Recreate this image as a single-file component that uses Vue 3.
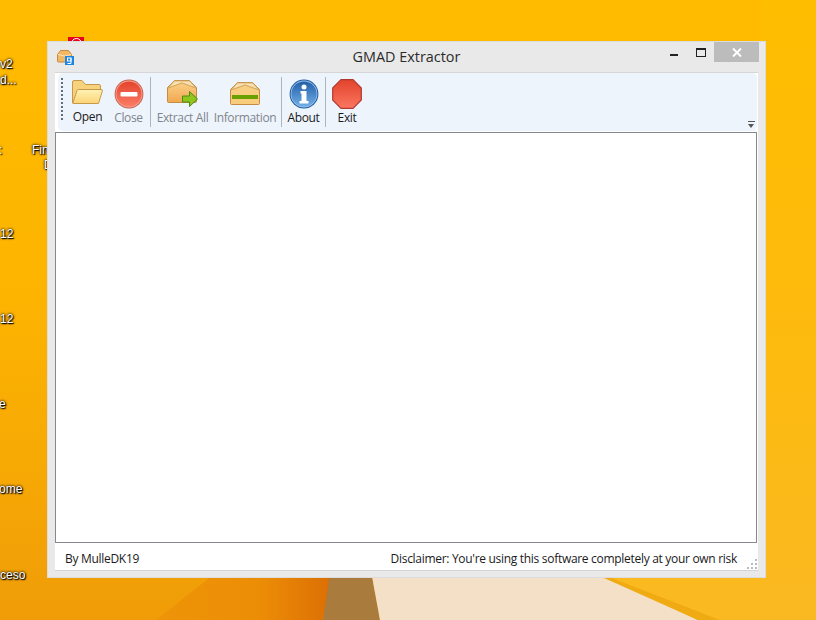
<template>
  <div class="desktop">
    <div class="wall-left"></div>
    <div class="wall-brown"></div>
    <div class="wall-cream"></div>
    <div class="wall-right"></div>
    <div class="wall-stripe"></div>

    <!-- desktop icon labels, cut off by the screen edge -->
    <span class="label" style="left:0;top:57px">v2</span>
    <span class="label" style="left:0;top:73px">d...</span>
    <span class="label" style="left:-1px;top:143px">:</span>
    <span class="label" style="left:32px;top:143px">Fin</span>
    <span class="label" style="left:44px;top:158px">D</span>
    <span class="label" style="left:0;top:227px">12</span>
    <span class="label" style="left:0;top:312px">12</span>
    <span class="label" style="left:-1px;top:397px">e</span>
    <span class="label" style="left:-1px;top:482px">ome</span>
    <span class="label" style="left:0;top:568px">ceso</span>
    <div class="red-icon"><i></i></div>

    <div class="window">
      <div class="titlebar">
        <svg class="app-icon" width="17" height="15" viewBox="0 0 17 15">
          <path d="M.5 4.500 3.500.5h8l3 4v6.500a1 1 0 0 1-1 1H1.500a1 1 0 0 1-1-1z" fill="#f2b866" stroke="#c98a3a"/>
          <path d="M1 4.500 7.500 6 14 4.500" fill="none" stroke="#fbe3b5"/>
          <rect x="8" y="6" width="9" height="9" fill="#1c86e0"/>
          <rect x="10.500" y="8" width="3.500" height="3" fill="none" stroke="#fff"/>
          <path d="M14 8v5.500h-3.500" fill="none" stroke="#fff"/>
        </svg>
        <div class="title">GMAD Extractor</div>
        <div class="win-controls">
          <span class="min"></span>
          <span class="max"></span>
          <span class="close">
            <svg width="10" height="9" viewBox="0 0 10 9"><path d="M1 .5 9 8.500M9 .5 1 8.500" stroke="#fff" stroke-width="2"/></svg>
          </span>
        </div>
      </div>

      <div class="client">
        <div class="toolbar-wrap">
          <div class="toolbar">
            <div class="grip"></div>

            <div class="tool open-tool">
              <div class="slot">
                <svg width="31" height="24" viewBox="0 0 31 24">
                  <defs>
                    <linearGradient id="folder" x1="0" y1="0" x2="0" y2="1"><stop offset="0" stop-color="#fff2b4"/><stop offset="1" stop-color="#fbd477"/></linearGradient>
                  </defs>
                  <path d="M.5 23V2A1.500 1.500 0 0 1 2 .5h8L13.500 4.500H27A1.500 1.500 0 0 1 28.500 6V10" fill="#f7d27c" stroke="#c8984a"/>
                  <path d="M.7 23.300 5 10.500A1.500 1.500 0 0 1 6.500 9.500H29a1.300 1.300 0 0 1 1.300 1.700L26.500 23.500H1z" fill="url(#folder)" stroke="#c8984a"/>
                </svg>
              </div>
              <span class="tool-label">Open</span>
            </div>

            <div class="tool off close-tool">
              <div class="slot">
                <svg width="30" height="30" viewBox="0 0 30 30">
                  <defs>
                    <linearGradient id="red" x1="0" y1="0" x2="0" y2="1"><stop offset="0" stop-color="#e4432c"/><stop offset="1" stop-color="#fb7d66"/></linearGradient>
                  </defs>
                  <circle cx="15" cy="15" r="14.400" fill="#c8604f"/>
                  <circle cx="15" cy="15" r="13.400" fill="#f8a898"/>
                  <circle cx="15" cy="15" r="12.600" fill="url(#red)"/>
                  <rect x="6.500" y="13" width="17" height="4.500" rx="1" fill="#fff"/>
                </svg>
              </div>
              <span class="tool-label">Close</span>
            </div>

            <div class="sep"></div>

            <div class="tool off extract-tool">
              <div class="slot">
                <svg width="31" height="27" viewBox="0 0 31 27">
                  <defs>
                    <linearGradient id="box1" x1="0" y1="0" x2="0" y2="1"><stop offset="0" stop-color="#fbd48c"/><stop offset="1" stop-color="#f1a750"/></linearGradient>
                  </defs>
                  <path d="M.5 7.500 7.500.5h15l7 7v14a1 1 0 0 1-1 1h-27a1 1 0 0 1-1-1z" fill="url(#box1)" stroke="#c48c44"/>
                  <path d="M1 8 15 3 29 8 22.500 1h-15z" fill="#f8e2b4" stroke="#d6a860" stroke-width=".8"/>
                  <path d="M1 8 15 3 29 8" fill="none" stroke="#d6a860" stroke-width=".8"/>
                  <path d="M15.500 16h7v-4.500l8 7.500-8 7.500V22h-7z" fill="#8fc61e" stroke="#4f8a10"/>
                </svg>
              </div>
              <span class="tool-label">Extract All</span>
            </div>

            <div class="tool off info-tool">
              <div class="slot">
                <svg width="31" height="23" viewBox="0 0 31 23">
                  <defs>
                    <linearGradient id="box2" x1="0" y1="0" x2="0" y2="1"><stop offset="0" stop-color="#f9cf85"/><stop offset="1" stop-color="#f8cc7c"/></linearGradient>
                  </defs>
                  <path d="M.5 7.500 7.500.5h15l7 7v14a1 1 0 0 1-1 1h-27a1 1 0 0 1-1-1z" fill="url(#box2)" stroke="#c48c44"/>
                  <path d="M1 8 15 3 29 8 22.500 1h-15z" fill="#f8e2b4" stroke="#d6a860" stroke-width=".8"/>
                  <path d="M1 8 15 3 29 8" fill="none" stroke="#d6a860" stroke-width=".8"/>
                  <rect x="2" y="13" width="26" height="4" fill="#6aa000"/>
                </svg>
              </div>
              <span class="tool-label">Information</span>
            </div>

            <div class="sep"></div>

            <div class="tool about-tool">
              <div class="slot">
                <svg width="30" height="30" viewBox="0 0 30 30">
                  <defs>
                    <linearGradient id="blue" x1="0" y1="0" x2="0" y2="1"><stop offset="0" stop-color="#235fa8"/><stop offset="1" stop-color="#70aee6"/></linearGradient>
                  </defs>
                  <circle cx="15" cy="15" r="14.400" fill="#1f5a9c"/>
                  <circle cx="15" cy="15" r="13.400" fill="#9cc6ee"/>
                  <circle cx="15" cy="15" r="12.600" fill="url(#blue)"/>
                  <circle cx="15" cy="8" r="2.500" fill="#fff"/>
                  <path d="M11.500 12h6v10h2v2.500h-9V22h2v-7.500h-1z" fill="#fff"/>
                </svg>
              </div>
              <span class="tool-label">About</span>
            </div>

            <div class="sep"></div>

            <div class="tool exit-tool">
              <div class="slot">
                <svg width="30" height="30" viewBox="0 0 30 30">
                  <defs>
                    <linearGradient id="stop" x1="0" y1="0" x2="0" y2="1"><stop offset="0" stop-color="#e2432c"/><stop offset="1" stop-color="#fb7660"/></linearGradient>
                  </defs>
                  <path d="M9 .7h12L29.300 9v12L21 29.300H9L.7 21V9z" fill="url(#stop)" stroke="#b03a30" stroke-width="1.200"/>
                </svg>
              </div>
              <span class="tool-label">Exit</span>
            </div>
          </div>
          <div class="overflow"><i></i><b></b></div>
        </div>

        <div class="content"></div>

        <div class="statusbar">
          <span>By MulleDK19</span>
          <span>Disclaimer: You're using this software completely at your own risk</span>
          <svg class="resize" width="12" height="12" viewBox="0 0 12 12" fill="#b8bcc2">
            <rect x="9" y="1" width="2" height="2"/><rect x="9" y="5" width="2" height="2"/><rect x="5" y="5" width="2" height="2"/>
            <rect x="9" y="9" width="2" height="2"/><rect x="5" y="9" width="2" height="2"/><rect x="1" y="9" width="2" height="2"/>
          </svg>
        </div>
      </div>
    </div>
  </div>
</template>

<script setup>
</script>

<style>
html, body {
  margin: 0;
  overflow: hidden;
}
</style>

<style scoped>
.desktop {
  position: relative;
  width: 816px;
  height: 620px;
  overflow: hidden;
  background: linear-gradient(180deg, #ffbb00 0%, #fdb500 45%, #f7a904 75%, #ef9c08 100%);
  font-family: "Open Sans", "Noto Sans", sans-serif;
}

/* wallpaper shapes along the bottom edge */
.wall-left {
  position: absolute;
  inset: 0;
  background: linear-gradient(90deg, #ee9408 160px, #ec8d06 260px, #dc6f04 331px);
  clip-path: polygon(232px 560px, 335px 560px, 323px 620px, 156px 620px);
}

.wall-brown {
  position: absolute;
  inset: 0;
  background: #a97c3e;
  clip-path: polygon(332px 560px, 369px 560px, 380px 620px, 323px 620px);
}

.wall-cream {
  position: absolute;
  inset: 0;
  background: #f3e0c6;
  clip-path: polygon(369px 560px, 570px 560px, 698px 620px, 380px 620px);
}

.wall-right {
  position: absolute;
  inset: 0;
  background: linear-gradient(180deg, #ffbd00 0%, #fdba10 60%, #fab922 100%);
  clip-path: polygon(760px 0, 816px 0, 816px 620px, 719px 620px, 611px 578px, 760px 560px);
}

.wall-stripe {
  position: absolute;
  inset: 0;
  background: #f0ab12;
  clip-path: polygon(604px 578px, 611px 578px, 719px 620px, 698px 620px);
}

.label {
  position: absolute;
  font-family: "Liberation Sans", sans-serif;
  font-size: 12px;
  line-height: 14px;
  color: #fff;
  text-shadow: 1px 1px 1px #000, 0 0 2px #000, 0 0 3px #3a2500;
  white-space: nowrap;
}

.red-icon {
  position: absolute;
  left: 68px;
  top: 37px;
  width: 16px;
  height: 6px;
  background: #e8001c;
  overflow: hidden;
}

.red-icon i {
  display: block;
  width: 9px;
  height: 9px;
  margin: 1px auto 0;
  border: 1px solid #fff;
  border-radius: 50%;
}

.window {
  position: absolute;
  left: 47px;
  top: 41px;
  width: 719px;
  height: 537px;
  box-sizing: border-box;
  display: flex;
  flex-direction: column;
  background: #e9e9e9;
  border: 1px solid #dcdcdc;
}

.titlebar {
  position: relative;
  height: 30px;
  flex-shrink: 0;
  display: flex;
  align-items: center;
  justify-content: center;
}

.app-icon {
  position: absolute;
  left: 9px;
  top: 8px;
}

.title {
  font-size: 14.400px;
  color: #2b2b2b;
  margin-bottom: 2px;
}

.win-controls {
  position: absolute;
  right: 6px;
  top: 0;
  height: 21px;
  display: flex;
  align-items: flex-start;
}

.min {
  width: 8px;
  height: 2px;
  background: #222;
  margin-top: 12px;
  margin-right: 18px;
}

.max {
  box-sizing: border-box;
  width: 10px;
  height: 9px;
  border: 1px solid #222;
  border-top-width: 2px;
  margin-top: 6px;
  margin-right: 8px;
}

.close {
  width: 45px;
  height: 20px;
  background: #bcbcbc;
  display: flex;
  align-items: center;
  justify-content: center;
}

.client {
  flex: 1;
  min-height: 0;
  display: flex;
  flex-direction: column;
  margin: 0 7px 6px;
  background: #fff;
  border-top: 1px solid #d6d6d6;
  border-bottom: 1px solid #d4d4d4;
  box-sizing: border-box;
}

.toolbar-wrap {
  position: relative;
  height: 59px;
  flex-shrink: 0;
}

.toolbar {
  height: 58px;
  box-sizing: border-box;
  display: flex;
  align-items: flex-start;
  margin: 0 1px 0 3px;
  background: #eef4fc;
  border-radius: 5px;
  padding: 4px 0 0 3px;
  letter-spacing: -0.350px;
}

.grip {
  width: 2px;
  height: 44px;
  margin: 1px 5px 0 0;
  background: repeating-linear-gradient(180deg, #666c74 0, #666c74 2px, transparent 2px, transparent 4px);
  flex-shrink: 0;
}

.tool {
  display: flex;
  flex-direction: column;
  align-items: center;
  height: 50px;
  flex-shrink: 0;
}

.slot {
  height: 33px;
  display: flex;
  align-items: center;
  justify-content: center;
}

.slot svg {
  display: block;
}

.open-tool { width: 39px; }
.close-tool { width: 43px; }
.extract-tool { width: 63px; }
.info-tool { width: 62px; margin-right: 5px; }
.about-tool { width: 43px; }
.exit-tool { width: 42px; }

.open-tool .slot svg {
  margin-bottom: 3px;
}

.open-tool .tool-label {
  margin-top: -1px;
}

.tool-label {
  font-size: 12px;
  line-height: 16px;
  color: #1a1a1a;
  white-space: nowrap;
}

.tool.off .tool-label {
  color: #7f858c;
}

.sep {
  width: 1px;
  height: 50px;
  background: #aeb5bd;
  flex-shrink: 0;
}

.overflow {
  position: absolute;
  right: 3px;
  bottom: 4px;
  width: 7px;
}

.overflow i {
  display: block;
  height: 1px;
  background: #555;
  margin-bottom: 2px;
}

.overflow b {
  display: block;
  width: 0;
  height: 0;
  border-left: 3.500px solid transparent;
  border-right: 3.500px solid transparent;
  border-top: 4px solid #555;
}

.content {
  flex: 1;
  min-height: 0;
  background: #fff;
  border: 1px solid #85888c;
  margin-right: 1px;
}

.statusbar {
  position: relative;
  height: 27px;
  flex-shrink: 0;
  box-sizing: border-box;
  display: flex;
  align-items: center;
  justify-content: space-between;
  padding: 3px 21px 0 10px;
  font-size: 12px;
  letter-spacing: -0.300px;
  color: #1a1a1a;
}

.resize {
  position: absolute;
  right: 0;
  bottom: 0;
}
</style>
